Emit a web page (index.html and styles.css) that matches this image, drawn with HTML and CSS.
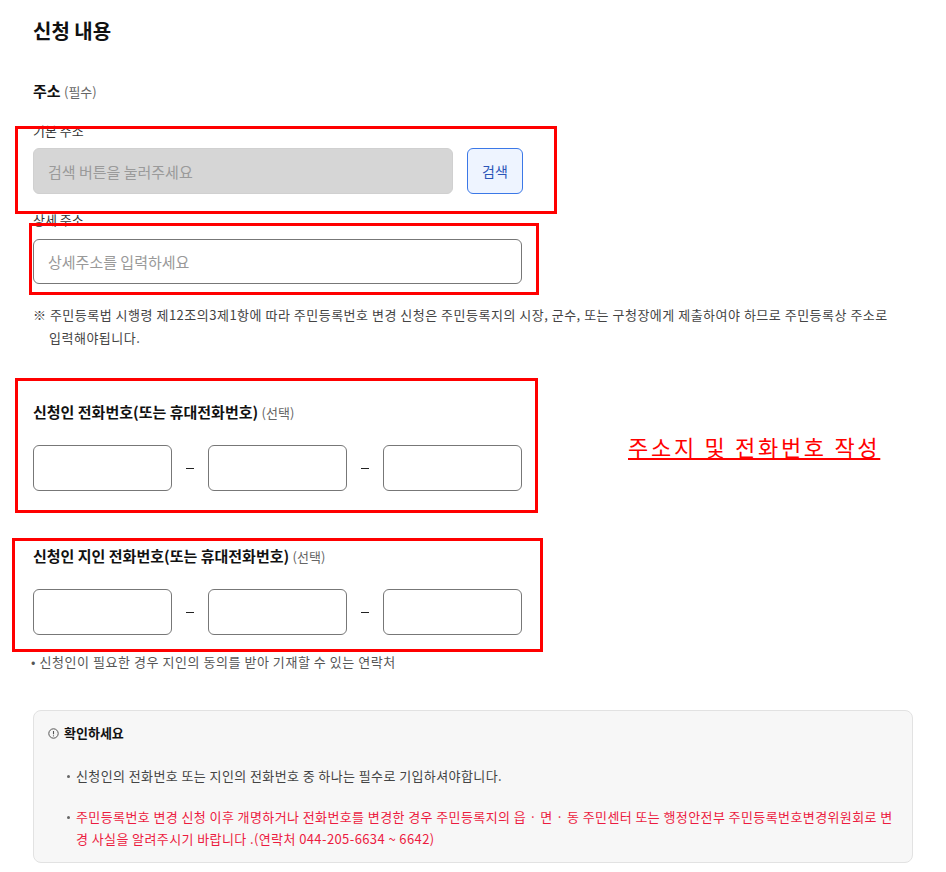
FILE: index.html
```html
<html>

<head>
    <meta charset="UTF-8">
    <meta name="viewport" content="width=device-width,initial-scale=1">
    <link rel="stylesheet" href="styles.css">
</head>

<body>
    <div class="page">
        <h2 class="title">신청 내용</h2>

        <section class="field">
            <h3 class="field-title">주소 <span class="opt">(필수)</span></h3>
            <label class="sub-label label-base">기본 주소</label>
            <div class="addr-row">
                <input class="inp inp-readonly" readonly placeholder="검색 버튼을 눌러주세요">
                <button class="btn-search">검색</button>
            </div>
            <label class="sub-label label-detail">상세 주소</label>
            <input class="inp inp-detail" placeholder="상세주소를 입력하세요">
            <p class="note">※ 주민등록법 시행령 제12조의3제1항에 따라 주민등록번호 변경 신청은 주민등록지의 시장, 군수, 또는 구청장에게 제출하여야 하므로 주민등록상 주소로 입력해야됩니다.</p>
        </section>

        <section class="field phone-1">
            <h3 class="field-title">신청인 전화번호(또는 휴대전화번호) <span class="opt">(선택)</span></h3>
            <div class="phone-row">
                <input class="inp inp-phone">
                <span class="dash"></span>
                <input class="inp inp-phone">
                <span class="dash"></span>
                <input class="inp inp-phone">
            </div>
        </section>

        <section class="field phone-2">
            <h3 class="field-title">신청인 지인 전화번호(또는 휴대전화번호) <span class="opt">(선택)</span></h3>
            <div class="phone-row">
                <input class="inp inp-phone">
                <span class="dash"></span>
                <input class="inp inp-phone">
                <span class="dash"></span>
                <input class="inp inp-phone">
            </div>
            <p class="bullet-note">• 신청인이 필요한 경우 지인의 동의를 받아 기재할 수 있는 연락처</p>
        </section>

        <div class="notice">
            <h4 class="notice-title">
                <svg class="ico-info" width="11" height="11" viewBox="0 0 11 11">
                    <circle cx="5.5" cy="5.5" r="4.7" fill="none" stroke="#555" stroke-width="1"/>
                    <line x1="5.5" y1="3" x2="5.5" y2="6.3" stroke="#555" stroke-width="1.1"/>
                    <circle cx="5.5" cy="7.8" r="0.6" fill="#555"/>
                </svg>
                확인하세요
            </h4>
            <ul class="notice-list">
                <li>신청인의 전화번호 또는 지인의 전화번호 중 하나는 필수로 기입하셔야합니다.</li>
                <li class="red">주민등록번호 변경 신청 이후 개명하거나 전화번호를 변경한 경우 주민등록지의 읍 · 면 · 동 주민센터 또는 행정안전부 주민등록번호변경위원회로 변경 사실을 알려주시기 바랍니다 .(연락처 044-205-6634 ~ 6642)</li>
            </ul>
        </div>

        <!-- annotation marks drawn over the form -->
        <div class="mark mark-1"></div>
        <div class="mark mark-2"></div>
        <div class="mark mark-3"></div>
        <div class="mark mark-4"></div>
        <div class="mark-caption">주소지 및 전화번호 작성</div>
    </div>
</body>

</html>
```

FILE: styles.css
```css
* {
    margin: 0;
    padding: 0;
    box-sizing: border-box;
    font-family: "Noto Sans CJK KR", "Noto Sans", sans-serif;
}

body {
    background: #fff;
    color: #222;
}

.page {
    position: relative;
    width: 946px;
    padding: 17px 33px 0 33px;
}

.title {
    font-size: 20px;
    font-weight: 700;
    line-height: 28px;
    color: #111;
}

.field-title {
    font-size: 15px;
    font-weight: 700;
    line-height: 22px;
    color: #111;
}

.opt {
    font-size: 13px;
    font-weight: 400;
    color: #666;
}

.field:first-of-type .field-title {
    margin-top: 35px;
}

.sub-label {
    display: block;
    font-size: 13px;
    line-height: 18px;
    color: #333;
}

.label-base {
    margin-top: 19px;
}

.label-detail {
    margin-top: 17px;
}

.inp {
    display: block;
    height: 46px;
    border: 1px solid #777;
    border-radius: 6px;
    background: #fff;
    padding: 0 14px;
    font-size: 15px;
    color: #222;
    outline: none;
}

.inp::placeholder {
    color: #999;
}

.addr-row {
    display: flex;
    gap: 14px;
    margin-top: 8px;
}

.inp-readonly {
    width: 420px;
    background: #d6d6d6;
    border-color: #d0d0d0;
}

.inp-readonly::placeholder {
    color: #9a9a9a;
}

.btn-search {
    width: 56px;
    height: 46px;
    border: 1px solid #3b78e7;
    border-radius: 6px;
    background: #eef4ff;
    color: #2a55b8;
    font-size: 14px;
    cursor: pointer;
}

.inp-detail {
    width: 489px;
    height: 45px;
    margin-top: 10px;
}

.note {
    margin-top: 19px;
    padding-left: 16px;
    text-indent: -16px;
    font-size: 13px;
    line-height: 23px;
    color: #444;
    letter-spacing: 0.5px;
    word-break: keep-all;
}

.phone-1 {
    margin-top: 52px;
}

.phone-2 {
    margin-top: 54px;
}

.phone-row {
    display: flex;
    align-items: center;
    margin-top: 21px;
}

.inp-phone {
    width: 139px;
}

.dash {
    width: 36px;
    display: flex;
    justify-content: center;
}

.dash::before {
    content: "";
    width: 8px;
    height: 1px;
    background: #222;
}

.bullet-note {
    margin-top: 18px;
    margin-left: -2px;
    font-size: 13px;
    line-height: 18px;
    color: #555;
    letter-spacing: 0.55px;
}

.notice {
    margin-top: 39px;
    width: 880px;
    background: #f7f7f7;
    border: 1px solid #e2e2e2;
    border-radius: 8px;
    padding: 13px 14px 12px 14px;
}

.notice-title {
    display: flex;
    align-items: center;
    gap: 5px;
    font-size: 13px;
    font-weight: 700;
    line-height: 18px;
    color: #111;
}

.notice-list {
    list-style: none;
    margin-top: 23px;
    padding-left: 28px;
}

.notice-list li {
    position: relative;
    font-size: 13px;
    line-height: 22px;
    color: #444;
    letter-spacing: 0.4px;
    word-break: break-all;
}

.notice-list li + li {
    margin-top: 19px;
}

.notice-list li::before {
    content: "";
    position: absolute;
    left: -9px;
    top: 10px;
    width: 3px;
    height: 3px;
    border-radius: 50%;
    background: #666;
}

.notice-list li.red {
    color: #ec1b3f;
}

.mark {
    position: absolute;
    border: 3px solid #ff0000;
}

.mark-1 {
    left: 15px;
    top: 126px;
    width: 542px;
    height: 88px;
}

.mark-2 {
    left: 29px;
    top: 223px;
    width: 510px;
    height: 72px;
}

.mark-3 {
    left: 15px;
    top: 378px;
    width: 523px;
    height: 135px;
}

.mark-4 {
    left: 12px;
    top: 538px;
    width: 531px;
    height: 114px;
}

.mark-caption {
    position: absolute;
    left: 628px;
    top: 432px;
    font-size: 22px;
    line-height: 28px;
    color: #ff0000;
    text-decoration: underline;
    letter-spacing: 2.7px;
}
```
